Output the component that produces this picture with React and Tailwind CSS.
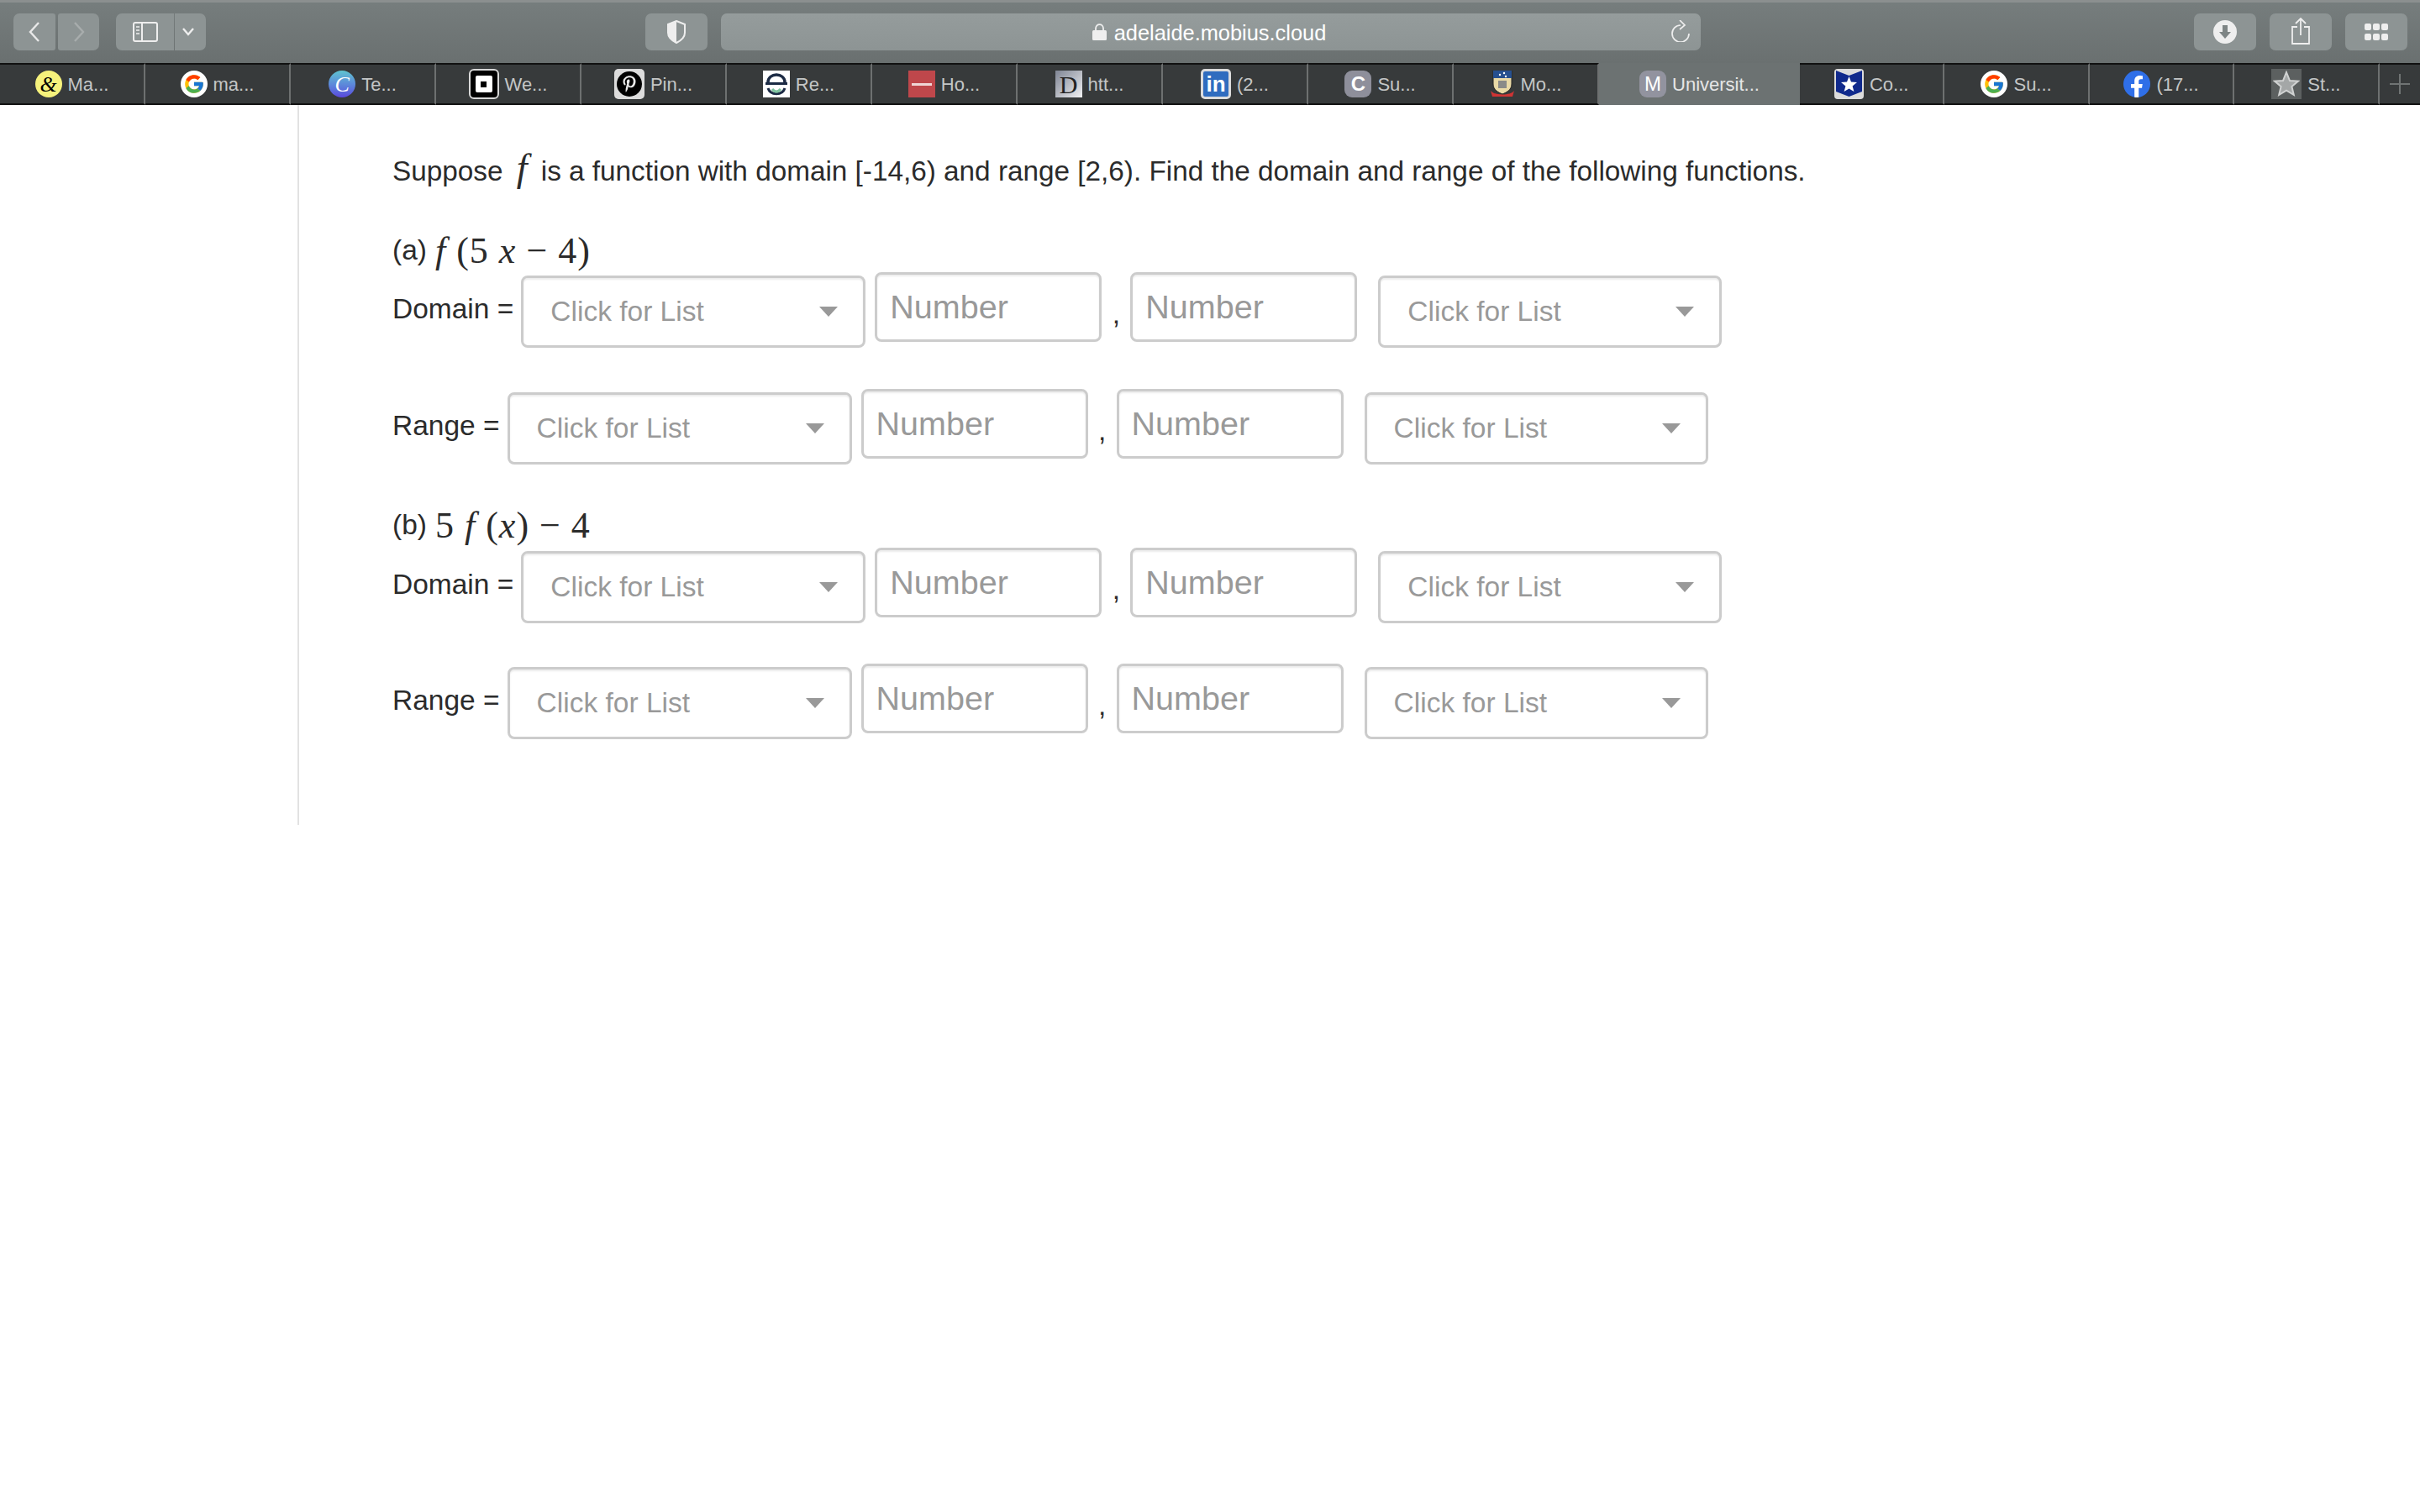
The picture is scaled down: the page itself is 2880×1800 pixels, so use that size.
import React from 'react';
import { FcGoogle } from 'react-icons/fc';
import { FaPinterestP, FaFacebookF } from 'react-icons/fa';

const helv = { fontFamily: '"Liberation Sans", Arial, sans-serif' };

const Favicon = ({ type }) => {
    if (type === 'amp') return (
        <div className="w-[32px] h-[32px] rounded-full bg-[#f6f27c] flex items-center justify-center text-black text-[26px] italic font-['Liberation_Serif',serif]">&amp;</div>
    );
    if (type === 'google') return (
        <div className="w-[32px] h-[32px] rounded-full bg-white flex items-center justify-center"><FcGoogle size={26} /></div>
    );
    if (type === 'canva') return (
        <div className="w-[32px] h-[32px] rounded-full bg-gradient-to-b from-[#5fc4cf] to-[#5a45dd] flex items-center justify-center text-white text-[26px] italic font-['Liberation_Serif',serif]">C</div>
    );
    if (type === 'square') return (
        <div className="w-[36px] h-[36px] rounded-[6px] bg-black border-2 border-[#d8d8d8] flex items-center justify-center">
            <div className="w-[20px] h-[20px] bg-white rounded-[2px] flex items-center justify-center"><div className="w-[7px] h-[7px] bg-black" /></div>
        </div>
    );
    if (type === 'pin') return (
        <div className="w-[36px] h-[36px] rounded-[5px] bg-[#dcdcdc] flex items-center justify-center">
            <div className="w-[30px] h-[30px] rounded-full bg-black flex items-center justify-center text-[#e8e8e8]"><FaPinterestP size={20} /></div>
        </div>
    );
    if (type === 're') return (
        <svg width="32" height="32" viewBox="0 0 32 32">
            <rect width="32" height="32" fill="#fff" />
            <path d="M6 14 C6 2 26 2 26 14" fill="none" stroke="#1c2b45" strokeWidth="3.5" />
            <rect x="3" y="14" width="26" height="3" fill="#1c2b45" />
            <path d="M6 21 C9 30 23 30 26 21" fill="none" stroke="#1c2b45" strokeWidth="3" />
            <path d="M11 22 C14 26 18 26 21 22" fill="none" stroke="#7fc4a0" strokeWidth="3" />
        </svg>
    );
    if (type === 'ho') return (
        <div className="w-[32px] h-[32px] bg-[#bf474b] flex items-center justify-center">
            <div className="w-[24px] h-[3px] bg-[#f0d5d5]" />
        </div>
    );
    if (type === 'd') return (
        <div className="w-[32px] h-[32px] bg-gradient-to-br from-[#7f8594] to-[#f2f2f4] flex items-center justify-center text-[#222] text-[30px] font-['Liberation_Serif',serif]">D</div>
    );
    if (type === 'in') return (
        <div className="w-[36px] h-[36px] rounded-[5px] bg-[#2f6cbf] border-[3px] border-[#dcdcdc] flex items-center justify-center text-white text-[26px] font-bold" style={helv}>in</div>
    );
    if (type === 'c') return (
        <div className="w-[32px] h-[32px] rounded-[9px] bg-[#8e8f9b] flex items-center justify-center text-white text-[24px] font-bold" style={helv}>C</div>
    );
    if (type === 'mo') return (
        <svg width="30" height="32" viewBox="0 0 30 32">
            <path d="M4 0 H26 V16 C26 23 20 26 15 28 C10 26 4 23 4 16 Z" fill="#e9d9a6" stroke="#222" strokeWidth="1" />
            <path d="M4 0 H26 V9 H4 Z" fill="#27508f" />
            <circle cx="12" cy="5" r="1.2" fill="#fff" /><circle cx="17" cy="3" r="1.2" fill="#fff" /><circle cx="19" cy="7" r="1.2" fill="#fff" />
            <rect x="10" y="12" width="10" height="9" fill="#8a8a88" />
            <path d="M1 24 C5 30 25 30 29 24 L27 31 H3 Z" fill="#cf3434" />
        </svg>
    );
    if (type === 'm') return (
        <div className="w-[32px] h-[32px] rounded-[9px] bg-[#92939f] flex items-center justify-center text-white text-[24px]" style={helv}>M</div>
    );
    if (type === 'co') return (
        <svg width="35" height="36" viewBox="0 0 35 36">
            <rect width="35" height="36" rx="4" fill="#dcdcdc" />
            <path d="M2 2 L17.5 8 L33 2 V27 L17.5 33 L2 27 Z" fill="#10298c" />
            <path d="M17.5 9 L20 15.5 L27 16 L21.6 20.4 L23.4 27 L17.5 23.4 L11.6 27 L13.4 20.4 L8 16 L15 15.5 Z" fill="#fff" />
        </svg>
    );
    if (type === 'fb') return (
        <div className="w-[32px] h-[32px] rounded-full bg-[#2f6fe8] flex items-end justify-center overflow-hidden text-white"><FaFacebookF size={26} /></div>
    );
    if (type === 'st') return (
        <div className="w-[36px] h-[36px] bg-[#5c6060] flex items-center justify-center">
            <svg width="32" height="32" viewBox="0 0 32 32">
                <path d="M16 2 L20 12 L30 12.6 L22.4 19 L24.8 29 L16 23.6 L7.2 29 L9.6 19 L2 12.6 L12 12 Z" fill="#a4a7a7" stroke="#d0d2d2" strokeWidth="2" />
            </svg>
        </div>
    );
    return null;
};

const tabs = [
    { icon: 'amp', title: 'Ma...' },
    { icon: 'google', title: 'ma...' },
    { icon: 'canva', title: 'Te...' },
    { icon: 'square', title: 'We...' },
    { icon: 'pin', title: 'Pin...' },
    { icon: 're', title: 'Re...' },
    { icon: 'ho', title: 'Ho...' },
    { icon: 'd', title: 'htt...' },
    { icon: 'in', title: '(2...' },
    { icon: 'c', title: 'Su...' },
    { icon: 'mo', title: 'Mo...' },
    { icon: 'm', title: 'Universit...', active: true },
    { icon: 'co', title: 'Co...' },
    { icon: 'google', title: 'Su...' },
    { icon: 'fb', title: '(17...' },
    { icon: 'st', title: 'St...' },
];

const ToolButton = ({ className, children }) => (
    <div className={`h-[44px] rounded-[7px] bg-[#8d9494] flex items-center justify-center ${className}`}>{children}</div>
);

const Toolbar = () => (
    <div className="h-[75px] bg-gradient-to-b from-[#767d7d] to-[#6a7070] border-t-[3px] border-[#8b8f8f] flex items-start pt-[13px] pl-[16px]">
        <ToolButton className="w-[50px] rounded-r-[3px]">
            <svg width="16" height="24" viewBox="0 0 16 24" fill="none" stroke="#e8e8e8" strokeWidth="2.4"><path d="M13 1 L3 12 L13 23" /></svg>
        </ToolButton>
        <ToolButton className="w-[49px] ml-[3px] rounded-l-[3px]">
            <svg width="16" height="24" viewBox="0 0 16 24" fill="none" stroke="#a8adad" strokeWidth="2.4"><path d="M3 1 L13 12 L3 23" /></svg>
        </ToolButton>
        <ToolButton className="w-[69px] ml-[20px] rounded-r-none">
            <svg width="30" height="24" viewBox="0 0 30 24" fill="none" stroke="#eeeeee" strokeWidth="2">
                <rect x="1" y="1" width="28" height="22" rx="2" />
                <path d="M11 1 V23" />
                <path d="M4 6 H8 M4 10 H8 M4 14 H8" strokeWidth="1.6" />
            </svg>
        </ToolButton>
        <ToolButton className="w-[37px] ml-[1px] rounded-l-none pr-[5px]">
            <svg width="14" height="10" viewBox="0 0 14 10" fill="none" stroke="#eeeeee" strokeWidth="2.4"><path d="M1 1 L7 8 L13 1" /></svg>
        </ToolButton>
        <ToolButton className="w-[74px] ml-[523px]">
            <svg width="24" height="28" viewBox="0 0 24 28">
                <path d="M12 1 L22 5 V15 C22 21 16 25 12 27 C8 25 2 21 2 15 V5 Z" fill="none" stroke="#eeeeee" strokeWidth="2" />
                <path d="M12 1 L2 5 V15 C2 21 8 25 12 27 Z" fill="#eeeeee" />
            </svg>
        </ToolButton>
        <div className="w-[1166px] h-[44px] ml-[16px] rounded-[7px] bg-gradient-to-b from-[#959c9c] to-[#8d9494] flex items-center relative">
            <div className="flex-1 flex items-center justify-center gap-[9px] text-white text-[25.4px] font-medium pt-[2px] -ml-[4px]" style={helv}>
                <svg width="17" height="20" viewBox="0 0 17 20" className="-mt-[1px]">
                    <path d="M4 9 V6 C4 -0.5 13 -0.5 13 6 V9" fill="none" stroke="#efefef" strokeWidth="1.8" />
                    <rect x="0" y="8" width="17" height="12" rx="1.5" fill="#efefef" />
                </svg>
                <span>adelaide.mobius.cloud</span>
            </div>
            <svg width="26" height="26" viewBox="0 0 26 26" fill="none" stroke="#eeeeee" strokeWidth="1.7" className="absolute right-[11px] top-[8px]">
                <path d="M13 6 A10 10 0 1 0 23 16" />
                <path d="M12 0 L18 6 L12 11" />
            </svg>
        </div>
        <ToolButton className="w-[74px] ml-[587px]">
            <svg width="28" height="28" viewBox="0 0 28 28">
                <circle cx="14" cy="14" r="14" fill="#eeeeee" />
                <path d="M11 6 H17 V14 H21 L14 22 L7 14 H11 Z" fill="#7e8585" />
            </svg>
        </ToolButton>
        <ToolButton className="w-[74px] ml-[16px]">
            <svg width="24" height="32" viewBox="0 0 24 32" fill="none" stroke="#eeeeee" strokeWidth="1.8" className="-mt-[3px]">
                <path d="M8 11 H2 V31 H22 V11 H16" />
                <path d="M12 21 V1 M6 7 L12 1 L18 7" />
            </svg>
        </ToolButton>
        <ToolButton className="w-[74px] ml-[16px]">
            <div className="grid grid-cols-3 gap-x-[2px] gap-y-[4px]">
                {[0, 1, 2, 3, 4, 5].map(i => <div key={i} className="w-[8px] h-[8px] rounded-[2px] bg-[#eeeeee]" />)}
            </div>
        </ToolButton>
    </div>
);

const TabBar = () => (
    <div className="h-[50px] flex" style={helv}>
        {tabs.map((tab, i) => (
            <div
                key={i}
                className={tab.active
                    ? 'w-[239px] h-full shrink-0 bg-[#6c7272] flex items-center justify-center gap-[7px] text-[#e6e6e6] text-[22px]'
                    : `${i > 11 ? 'w-[172.4px]' : 'w-[173px]'} h-full shrink-0 bg-[#373a3b] border-t-2 border-b-2 border-t-[#111] border-b-[#111] border-r-2 border-r-[#6d7070] flex items-center justify-center gap-[7px] text-[#c4c6c6] text-[22px]`}
            >
                <Favicon type={tab.icon} />
                <span>{tab.title}</span>
            </div>
        ))}
        <div className="flex-1 h-full bg-[#373a3b] border-t-2 border-b-2 border-t-[#111] border-b-[#111] flex items-center justify-center text-[#6f7373]">
            <svg width="24" height="24" viewBox="0 0 24 24" stroke="currentColor" strokeWidth="2"><path d="M12 0 V24 M0 12 H24" /></svg>
        </div>
    </div>
);

const Select = ({ width, ml }) => (
    <div className={`${width} ${ml} h-[86px] mt-[4px] shrink-0 rounded-[8px] border-[3px] border-[#cccccc] bg-white shadow-[inset_0_2px_2px_rgba(0,0,0,0.08)] flex items-center justify-between pl-[32px] pr-[30px] text-[33.5px] text-[#999999]`}>
        <span>Click for List</span>
        <svg width="22" height="12" viewBox="0 0 22 12"><path d="M0 0 H22 L11 12 Z" fill="#999999" /></svg>
    </div>
);

const NumberInput = ({ ml }) => (
    <input
        type="text"
        placeholder="Number"
        className={`${ml} w-[270px] h-[83px] shrink-0 rounded-[8px] border-[3px] border-[#cccccc] bg-white shadow-[inset_0_2px_2px_rgba(0,0,0,0.08)] pl-[15px] text-[39.5px] outline-none placeholder:text-[#999999]`}
    />
);

const AnswerRow = ({ label, gapTop }) => (
    <div className={`flex items-start ${gapTop}`}>
        <span className="text-[33.5px] leading-[88px] mr-[9px] whitespace-nowrap">{label}</span>
        <Select width="w-[410px]" ml="" />
        <NumberInput ml="ml-[11px]" />
        <span className="w-[34px] h-[90px] text-center text-[33.5px] leading-[100px]">,</span>
        <NumberInput ml="" />
        <Select width="w-[409px]" ml="ml-[25px]" />
    </div>
);

const Var = ({ children }) => <i className="font-['Liberation_Serif',serif]">{children}</i>;

const PartLabel = ({ part, gapTop, children }) => (
    <div className={`h-[48px] pb-[3px] flex items-center ${gapTop} text-[33.5px] whitespace-nowrap`}>
        <span>{part}</span>
        <span className="ml-[10px] text-[44px] tracking-[1px] font-['Liberation_Serif',serif] whitespace-pre">{children}</span>
    </div>
);

export default function App() {
    return (
        <div className="min-h-[1800px] bg-white text-[#2b2b2b]" style={helv}>
            <Toolbar />
            <TabBar />
            {/* question panel */}
            <div className="ml-[354px] w-[2526px] h-[857px] border-l-2 border-[#e2e2e2] pl-[111px] pt-[53px]">
                <p className="h-[42px] leading-[42px] text-[33.3px] whitespace-nowrap">
                    Suppose <span className="mx-[7px] text-[46px] leading-[42px]"><Var>f</Var></span> is a function with domain [-14,6) and range [2,6). Find the domain and range of the following functions.
                </p>
                <PartLabel part="(a)" gapTop="mt-[56px]">
                    <Var>f</Var> (5 <Var>x</Var> − 4)
                </PartLabel>
                <AnswerRow label="Domain =" gapTop="" />
                <AnswerRow label="Range =" gapTop="mt-[49px]" />
                <PartLabel part="(b)" gapTop="mt-[50px]">
                    5 <Var>f</Var> (<Var>x</Var>) − 4
                </PartLabel>
                <AnswerRow label="Domain =" gapTop="mt-[1px]" />
                <AnswerRow label="Range =" gapTop="mt-[48px]" />
            </div>
        </div>
    );
}
